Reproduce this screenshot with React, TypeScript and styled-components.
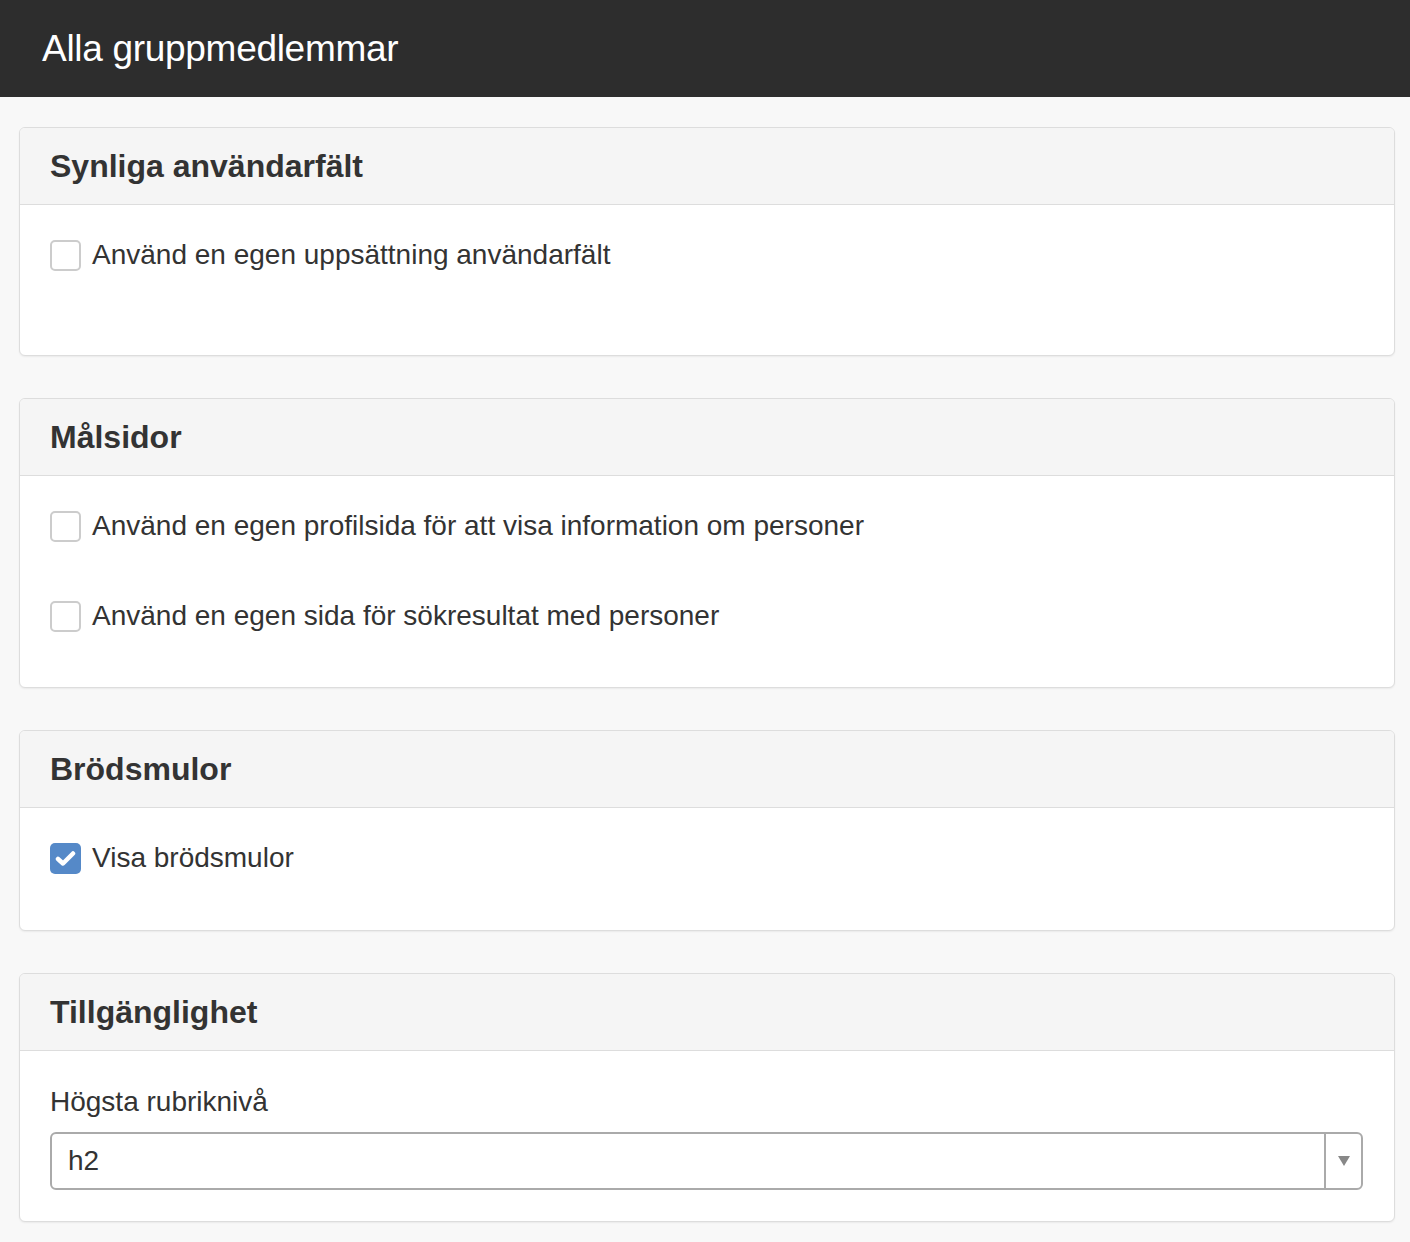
import React from 'react';
import styled, { createGlobalStyle } from 'styled-components';

const GlobalStyle = createGlobalStyle`
    html, body {
        margin: 0;
        padding: 0;
        background: #f8f8f8;
        font-family: "Liberation Sans", Arial, sans-serif;
        color: #333333;
    }
`;

// ヘッダー
const TopBar = styled.header`
    height: 97px;
    background: #2d2d2d;
    display: flex;
    align-items: center;
    padding: 0 42px;
`;

const TopTitle = styled.h1`
    margin: 0;
    font-size: 37px;
    font-weight: normal;
    color: #ffffff;
    letter-spacing: -0.3px;
`;

const Content = styled.main`
    padding: 30px 15px 20px 19px;
    display: flex;
    flex-direction: column;
    gap: 42px;
`;

const Panel = styled.section`
    background: #ffffff;
    border: 1px solid #dddddd;
    border-radius: 6px;
    box-shadow: 0 1px 2px rgba(0, 0, 0, 0.06);
    overflow: hidden;
`;

const PanelHeader = styled.div`
    height: 76px;
    background: #f5f5f5;
    border-bottom: 1px solid #dddddd;
    display: flex;
    align-items: center;
    padding: 0 30px;
`;

const PanelTitle = styled.h2`
    margin: 0;
    font-size: 32px;
    font-weight: bold;
    color: #333333;
`;

const PanelBody = styled.div<{ $top?: number; $bottom: number }>`
    padding: ${({ $top = 30 }) => $top}px 31px ${({ $bottom }) => $bottom}px 30px;
    display: flex;
    flex-direction: column;
    gap: 50px;
`;

const CheckRow = styled.label`
    display: flex;
    align-items: center;
    gap: 11px;
    height: 40px;
    font-size: 28px;
    color: #333333;
`;

const Box = styled.span<{ $checked: boolean }>`
    width: 31px;
    height: 31px;
    box-sizing: border-box;
    border-radius: 5px;
    border: ${({ $checked }) => ($checked ? 'none' : '2px solid #cccccc')};
    background: ${({ $checked }) => ($checked ? '#5589c8' : '#ffffff')};
    display: flex;
    align-items: center;
    justify-content: center;
    flex-shrink: 0;
`;

const FieldLabel = styled.div`
    font-size: 28px;
    color: #333333;
    margin-bottom: 14px;
    line-height: 32px;
`;

const SelectBox = styled.div`
    height: 58px;
    box-sizing: border-box;
    border: 2px solid #aaaaaa;
    border-radius: 6px;
    display: flex;
    align-items: stretch;
    background: #ffffff;
`;

const SelectValue = styled.div`
    flex: 1;
    display: flex;
    align-items: center;
    padding-left: 16px;
    font-size: 28px;
    color: #333333;
`;

const SelectArrow = styled.div`
    width: 35px;
    border-left: 2px solid #aaaaaa;
    display: flex;
    align-items: center;
    justify-content: center;
`;

type CheckItemProps = {
    label: string;
    checked?: boolean;
};

const CheckItem: React.FC<CheckItemProps> = ({ label, checked = false }) => (
    <CheckRow>
        <Box $checked={checked}>
            {checked && (
                <svg width="21" height="17" viewBox="0 0 21 17">
                    <path d="M3 9 L8 13.5 L18 3.5" fill="none" stroke="#ffffff" strokeWidth="4.5" strokeLinecap="round" strokeLinejoin="round" />
                </svg>
            )}
        </Box>
        <span>{label}</span>
    </CheckRow>
);

const App: React.FC = () => {
    return (
        <>
            <GlobalStyle />
            <TopBar>
                <TopTitle>Alla gruppmedlemmar</TopTitle>
            </TopBar>
            <Content>
                <Panel>
                    <PanelHeader>
                        <PanelTitle>Synliga användarfält</PanelTitle>
                    </PanelHeader>
                    <PanelBody $bottom={80}>
                        <CheckItem label="Använd en egen uppsättning användarfält" />
                    </PanelBody>
                </Panel>
                <Panel>
                    <PanelHeader>
                        <PanelTitle>Målsidor</PanelTitle>
                    </PanelHeader>
                    <PanelBody $bottom={51}>
                        <CheckItem label="Använd en egen profilsida för att visa information om personer" />
                        <CheckItem label="Använd en egen sida för sökresultat med personer" />
                    </PanelBody>
                </Panel>
                <Panel>
                    <PanelHeader>
                        <PanelTitle>Brödsmulor</PanelTitle>
                    </PanelHeader>
                    <PanelBody $bottom={52}>
                        <CheckItem label="Visa brödsmulor" checked />
                    </PanelBody>
                </Panel>
                <Panel>
                    <PanelHeader>
                        <PanelTitle>Tillgänglighet</PanelTitle>
                    </PanelHeader>
                    <PanelBody $top={35} $bottom={31}>
                        <div>
                            <FieldLabel>Högsta rubriknivå</FieldLabel>
                            <SelectBox>
                                <SelectValue>h2</SelectValue>
                                <SelectArrow>
                                    <svg width="12" height="10" viewBox="0 0 12 10">
                                        <path d="M0 0 H12 L6 10 Z" fill="#888888" />
                                    </svg>
                                </SelectArrow>
                            </SelectBox>
                        </div>
                    </PanelBody>
                </Panel>
            </Content>
        </>
    );
};

export default App;
